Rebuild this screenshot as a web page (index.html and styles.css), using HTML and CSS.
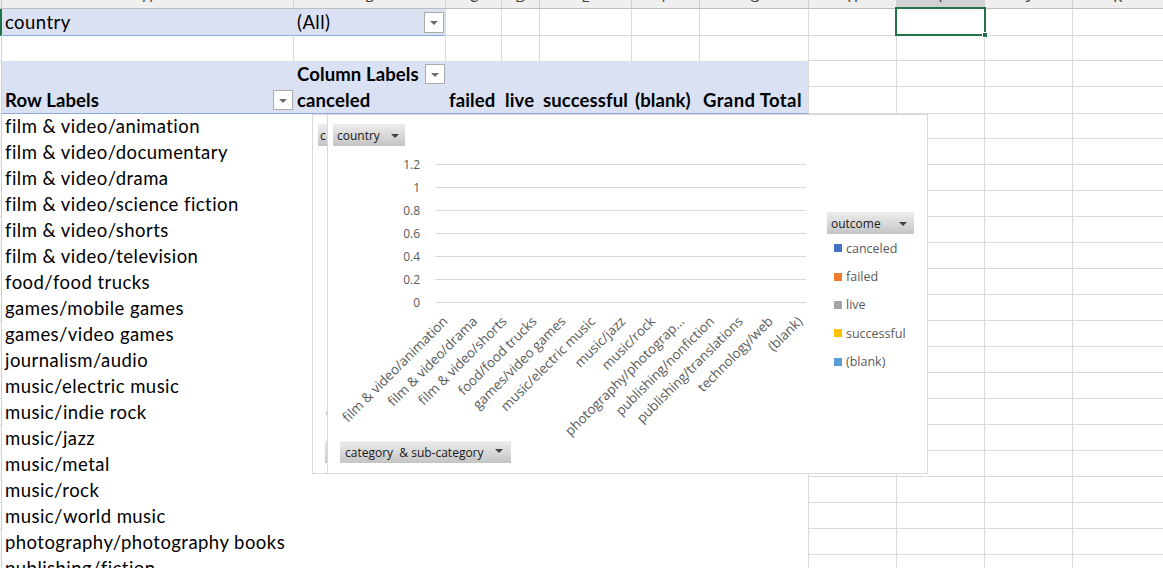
FILE: index.html
```html
<!DOCTYPE html>
<html>
<head>
<meta charset="utf-8">
<link rel="stylesheet" href="styles.css">
</head>
<body>
<div class="sheet">
  <div class="row colhead">
    <div class="ch stub"></div>
    <div class="ch"><span>A</span></div>
    <div class="ch"><span>B</span></div>
    <div class="ch"><span>C</span></div>
    <div class="ch"><span>D</span></div>
    <div class="ch"><span>E</span></div>
    <div class="ch"><span>F</span></div>
    <div class="ch"><span>G</span></div>
    <div class="ch"><span>H</span></div>
    <div class="ch on"><span>I</span></div>
    <div class="ch"><span>J</span></div>
    <div class="ch"><span>K</span></div>
  </div>

  <div class="row">
    <div class="rh act"></div>
    <div class="pf t">country</div>
    <div class="pf pfb t">(All)<span class="dd dd1"></span></div>
    <div class="c"></div><div class="c"></div><div class="c"></div><div class="c"></div><div class="c"></div>
    <div class="c"></div>
    <div class="c sel"><span class="selbox"><span class="handle"></span></span></div>
    <div class="c"></div><div class="c"></div>
  </div>

  <div class="row">
    <div class="rh"></div>
    <div class="c nb"></div><div class="c nb"></div>
    <div class="c nb"></div><div class="c nb"></div><div class="c nb"></div><div class="c nb"></div><div class="c nb"></div>
    <div class="c"></div><div class="c"></div><div class="c"></div><div class="c"></div>
  </div>

  <div class="row">
    <div class="rh"></div>
    <div class="h"></div>
    <div class="h t b">Column Labels<span class="dd dd3"></span></div>
    <div class="h s5"></div>
    <div class="c"></div><div class="c"></div><div class="c"></div><div class="c"></div>
  </div>

  <div class="row">
    <div class="rh"></div>
    <div class="h hb t b">Row Labels<span class="dd dd4"></span></div>
    <div class="h hb t b">canceled</div>
    <div class="h hb t b">failed</div>
    <div class="h hb t b">live</div>
    <div class="h hb t b">successful</div>
    <div class="h hb t b">(blank)</div>
    <div class="h hb t b gt">Grand Total</div>
    <div class="c"></div><div class="c"></div><div class="c"></div><div class="c"></div>
  </div>

  <div class="row"><div class="rh"></div><div class="t">film &amp; video/animation</div><div class="pb"></div><div class="c"></div><div class="c"></div><div class="c"></div><div class="c"></div></div>
  <div class="row"><div class="rh"></div><div class="t">film &amp; video/documentary</div><div class="pb"></div><div class="c"></div><div class="c"></div><div class="c"></div><div class="c"></div></div>
  <div class="row"><div class="rh"></div><div class="t">film &amp; video/drama</div><div class="pb"></div><div class="c"></div><div class="c"></div><div class="c"></div><div class="c"></div></div>
  <div class="row"><div class="rh"></div><div class="t">film &amp; video/science fiction</div><div class="pb"></div><div class="c"></div><div class="c"></div><div class="c"></div><div class="c"></div></div>
  <div class="row"><div class="rh"></div><div class="t">film &amp; video/shorts</div><div class="pb"></div><div class="c"></div><div class="c"></div><div class="c"></div><div class="c"></div></div>
  <div class="row"><div class="rh"></div><div class="t">film &amp; video/television</div><div class="pb"></div><div class="c"></div><div class="c"></div><div class="c"></div><div class="c"></div></div>
  <div class="row"><div class="rh"></div><div class="t">food/food trucks</div><div class="pb"></div><div class="c"></div><div class="c"></div><div class="c"></div><div class="c"></div></div>
  <div class="row"><div class="rh"></div><div class="t">games/mobile games</div><div class="pb"></div><div class="c"></div><div class="c"></div><div class="c"></div><div class="c"></div></div>
  <div class="row"><div class="rh"></div><div class="t">games/video games</div><div class="pb"></div><div class="c"></div><div class="c"></div><div class="c"></div><div class="c"></div></div>
  <div class="row"><div class="rh"></div><div class="t">journalism/audio</div><div class="pb"></div><div class="c"></div><div class="c"></div><div class="c"></div><div class="c"></div></div>
  <div class="row"><div class="rh"></div><div class="t">music/electric music</div><div class="pb"></div><div class="c"></div><div class="c"></div><div class="c"></div><div class="c"></div></div>
  <div class="row"><div class="rh"></div><div class="t">music/indie rock</div><div class="pb"></div><div class="c"></div><div class="c"></div><div class="c"></div><div class="c"></div></div>
  <div class="row"><div class="rh"></div><div class="t">music/jazz</div><div class="pb"></div><div class="c"></div><div class="c"></div><div class="c"></div><div class="c"></div></div>
  <div class="row"><div class="rh"></div><div class="t">music/metal</div><div class="pb"></div><div class="c"></div><div class="c"></div><div class="c"></div><div class="c"></div></div>
  <div class="row"><div class="rh"></div><div class="t">music/rock</div><div class="pb"></div><div class="c"></div><div class="c"></div><div class="c"></div><div class="c"></div></div>
  <div class="row"><div class="rh"></div><div class="t">music/world music</div><div class="pb"></div><div class="c"></div><div class="c"></div><div class="c"></div><div class="c"></div></div>
  <div class="row"><div class="rh"></div><div class="t">photography/photography books</div><div class="pb"></div><div class="c"></div><div class="c"></div><div class="c"></div><div class="c"></div></div>
  <div class="row"><div class="rh"></div><div class="t">publishing/fiction</div><div class="pb"></div><div class="c"></div><div class="c"></div><div class="c"></div><div class="c"></div></div>

  <div class="chart">
    <div class="ghost">
      <div class="btn gbtn">c</div>
      <div class="gtick"></div>
      <div class="gblk"></div>
    </div>
    <div class="front">
      <div class="btn cbtn">country<i class="tri"></i></div>
      <div class="yaxis">
        <div class="gl"><span>1.2</span><i></i></div>
        <div class="gl"><span>1</span><i></i></div>
        <div class="gl"><span>0.8</span><i></i></div>
        <div class="gl"><span>0.6</span><i></i></div>
        <div class="gl"><span>0.4</span><i></i></div>
        <div class="gl"><span>0.2</span><i></i></div>
        <div class="gl"><span>0</span><i></i></div>
      </div>
      <div class="xaxis">
        <div class="slot"><span>film &amp; video/animation</span></div>
        <div class="slot"><span>film &amp; video/drama</span></div>
        <div class="slot"><span>film &amp; video/shorts</span></div>
        <div class="slot"><span>food/food trucks</span></div>
        <div class="slot"><span>games/video games</span></div>
        <div class="slot"><span>music/electric music</span></div>
        <div class="slot"><span>music/jazz</span></div>
        <div class="slot"><span>music/rock</span></div>
        <div class="slot"><span>photography/photograp...</span></div>
        <div class="slot"><span>publishing/nonfiction</span></div>
        <div class="slot"><span>publishing/translations</span></div>
        <div class="slot"><span>technology/web</span></div>
        <div class="slot"><span>(blank)</span></div>
      </div>
      <div class="legend">
        <div class="btn obtn">outcome<i class="tri"></i></div>
        <div class="li"><i class="k1"></i>canceled</div>
        <div class="li"><i class="k2"></i>failed</div>
        <div class="li"><i class="k3"></i>live</div>
        <div class="li"><i class="k4"></i>successful</div>
        <div class="li"><i class="k5"></i>(blank)</div>
      </div>
      <div class="btn catbtn">category &nbsp;&amp; sub-category<i class="tri"></i></div>
    </div>
  </div>
</div>
</body>
</html>
```

FILE: styles.css
```css
* { box-sizing: border-box; margin: 0; padding: 0; }
html, body { width: 1163px; height: 568px; overflow: hidden; background: #fff; }
body { font-family: Lato, "Liberation Sans", sans-serif; color: #000; }

.sheet { position: relative; width: 1164px; }

.row {
  display: grid;
  grid-template-columns: 2px 292px 152px 56px 38px 92px 68px 109px 88px 88px 88px 91px;
  height: 26px;
}

/* column header strip (mostly scrolled off) */
.colhead { height: 9px; background: #efefef; }
.ch {
  border-right: 1px solid #d0d0d0;
  border-bottom: 1px solid #bdbdbd;
  overflow: hidden;
  display: flex;
  justify-content: center;
  align-items: flex-end;
}
.ch span { font-size: 14px; line-height: 14px; margin-bottom: 4px; color: #444; }
.ch.on { background: #d2d2d2; border-bottom-color: #9a9a9a; }
.ch.stub { border-right-color: #c8c8c8; }

/* row header stub */
.rh { border-right: 1px solid #cfcfcf; border-bottom: 1px solid #dadada; }
.rh.act { background: #217346; border-right-color: #217346; border-bottom: 0; }

/* grid cells */
.c { border-right: 1px solid #dadada; border-bottom: 1px solid #dadada; position: relative; }
.c.nb { border-bottom: 0; }

/* text cells */
.t {
  position: relative;
  padding-left: 3px;
  padding-top: 1px;
  font-size: 18.5px;
  line-height: 25px;
  letter-spacing: 0.45px;
  white-space: nowrap;
}
.b { font-weight: 700; letter-spacing: 0.12px; }
.gt { letter-spacing: 0.4px; }

/* pivot filter */
.pf { background: #d9e1f2; border-bottom: 1px solid #8ea9db; }
.pfb { border-right: 1px solid #dadada; }

/* pivot header */
.h { background: #d9e1f2; position: relative; }
.hb { border-bottom: 1px solid #8ea9db; }
.s5 { grid-column: span 5; border-right: 1px solid #dadada; }
.row > .h:nth-child(8) { border-right: 1px solid #dadada; }

/* pivot body blank area */
.pb { grid-column: span 6; border-right: 1px solid #dadada; }

/* dropdown buttons */
.dd {
  position: absolute;
  width: 20px;
  height: 21px;
  background: #fff;
  border: 1px solid #ababab;
}
.dd::after {
  content: "";
  position: absolute;
  left: 5px;
  top: 8px;
  border-left: 4px solid transparent;
  border-right: 4px solid transparent;
  border-top: 4px solid #6b6b6b;
}
.dd1 { right: 1px; top: 3px; }
.dd3 { right: 1px; top: 3px; height: 20px; }
.dd4 { right: 1px; top: 3px; height: 20px; }

/* selected cell */
.sel { overflow: visible; }
.selbox {
  position: absolute;
  left: -2px; top: -2px; right: -2px; bottom: -1px;
  border: 2px solid #217346;
  z-index: 3;
}
.handle {
  position: absolute;
  right: -4px; bottom: -4px;
  width: 6px; height: 6px;
  background: #217346;
  border: 1px solid #fff;
}

/* chart */
.chart {
  position: absolute;
  left: 312px;
  top: 114px;
  width: 616px;
  height: 360px;
  border: 1px solid #d9d9d9;
  background: #fff;
  display: flex;
  z-index: 2;
  font-family: "Open Sans", "Liberation Sans", sans-serif;
}
.ghost { position: relative; width: 14px; overflow: hidden; }
.front { position: relative; flex: 1; border-left: 1px solid #d9d9d9; }

.btn {
  position: absolute;
  height: 22px;
  background: linear-gradient(#ededed, #c4c4c4);
  font-size: 12px;
  color: #1a1a1a;
  display: flex;
  align-items: center;
  padding-left: 4px;
  white-space: nowrap;
}
.tri {
  position: absolute;
  top: 10px;
  border-left: 4px solid transparent;
  border-right: 4px solid transparent;
  border-top: 4px solid #404040;
}
.gbtn { left: 5px; top: 9px; width: 12px; padding-left: 2px; }
.gtick { position: absolute; left: 13px; top: 297px; width: 1px; height: 3px; background: #bdbdbd; }
.gblk { position: absolute; left: 12px; top: 326px; width: 2px; height: 22px; background: linear-gradient(#e6e6e6, #c8c8c8); }

.cbtn { left: 5px; top: 9px; width: 72px; }
.cbtn .tri { right: 6px; }

.catbtn { left: 12px; top: 326px; width: 171px; padding-left: 5px; }
.catbtn .tri { right: 8px; top: 8px; }

.yaxis { position: absolute; left: 0; top: 38px; }
.gl { display: flex; align-items: center; height: 23px; }
.gl span { width: 92px; text-align: right; font-size: 12px; color: #595959; line-height: 14px; }
.gl i { display: block; width: 371px; height: 1px; margin-left: 15px; background: #d9d9d9; }

.xaxis { position: absolute; left: 82px; top: 198px; display: flex; }
.slot { position: relative; width: 29.55px; height: 1px; }
.slot span {
  position: absolute;
  right: 0;
  top: 0;
  white-space: nowrap;
  font-size: 13.4px;
  line-height: 16px;
  color: #595959;
  transform-origin: right top;
  transform: rotate(-45deg);
}

.legend { position: absolute; left: 499px; top: 97px; width: 90px; }
.obtn { position: relative; width: 87px; }
.obtn .tri { right: 7px; }
.li {
  display: flex;
  align-items: center;
  height: 28.4px;
  padding-left: 7px;
  font-size: 12.5px;
  color: #595959;
}
.li i { width: 8px; height: 8px; margin-right: 4px; }
.k1 { background: #4472c4; }
.k2 { background: #ed7d31; }
.k3 { background: #a5a5a5; }
.k4 { background: #ffc000; }
.k5 { background: #5b9bd5; }
```
